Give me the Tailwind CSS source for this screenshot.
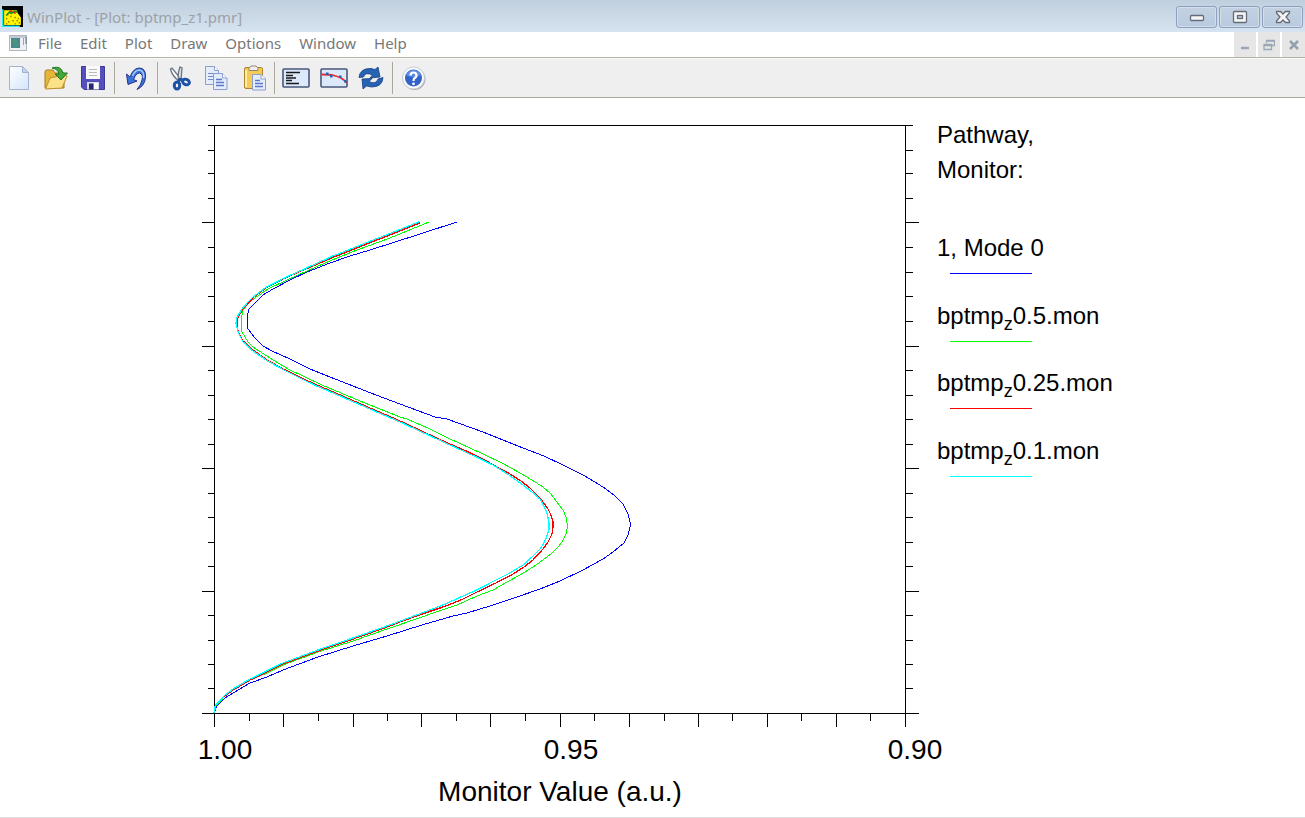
<!DOCTYPE html>
<html lang="en">
<head>
<meta charset="utf-8">
<title>WinPlot - [Plot: bptmp_z1.pmr]</title>
<script src="https://cdn.jsdelivr.net/npm/@tailwindcss/browser@4"></script>
</head>
<body class="flex min-h-screen flex-col bg-white font-['Noto_Sans',sans-serif]">

<header class="flex h-8 items-center bg-linear-to-b from-[#c0cfde] to-[#d6e3f0] pr-[2px] pl-[2px]">
  <svg class="size-[21px]" viewBox="0 0 20 20" aria-hidden="true">
    <rect width="20" height="20" fill="#000"/>
    <path d="M0 3h1.500v15.500H17V20H0z" fill="#30e8f0"/>
    <path d="M2 4h12l1 3 3 4v7H2z" fill="#fff500"/>
    <path d="M4 9l3-3 2 1 3-2 3 1" stroke="#089020" stroke-width="1.500" fill="none"/>
    <path d="M7 5h3M11 6l2 1M5 8h1" stroke="#e02010" stroke-width="1.500"/>
    <path d="M4 12h1M8 10h1M12 11h1M15 12h1M6 15h1M10 14h1M14 14h1M4 17h1M12 17h1M16 16h1" stroke="#7a5a00" stroke-width="1.300"/>
  </svg>
  <h1 class="ml-[4px] flex-1 pt-0.5 text-[15px] leading-5 text-[#9da2a7]">WinPlot - [Plot: bptmp_z1.pmr]</h1>
  <div class="flex gap-[2px] pt-px">
    <button aria-label="Minimize" class="flex h-[22px] w-[41px] items-center justify-center rounded-[3px] border border-[#8ea0bd] bg-linear-to-b from-[#c3d1e1] to-[#b9cbe0] shadow-[inset_0_0_0_1px_#d3deea]">
      <svg class="h-3.5 w-4" viewBox="0 0 16 14"><rect x="1.500" y="5.500" width="13" height="5" rx="1" fill="#f5f5f5" stroke="#666b78" stroke-width="1.300"/></svg>
    </button>
    <button aria-label="Maximize" class="flex h-[22px] w-[41px] items-center justify-center rounded-[3px] border border-[#8ea0bd] bg-linear-to-b from-[#c3d1e1] to-[#b9cbe0] shadow-[inset_0_0_0_1px_#d3deea]">
      <svg class="h-3.5 w-4" viewBox="0 0 16 14"><rect x="1.500" y="1.500" width="13" height="11" rx="1" fill="#f5f5f5" stroke="#666b78" stroke-width="1.300"/><rect x="5.500" y="5.500" width="5" height="3" fill="#b7c8dc" stroke="#666b78" stroke-width="1.300"/></svg>
    </button>
    <button aria-label="Close" class="flex h-[22px] w-[41px] items-center justify-center rounded-[3px] border border-[#8ea0bd] bg-linear-to-b from-[#c3d1e1] to-[#b9cbe0] shadow-[inset_0_0_0_1px_#d3deea]">
      <svg class="h-3.5 w-4" viewBox="0 0 16 14"><path d="M1.500 1.500h4L8 4l2.500-2.500h4v1.500L11 7l3.500 4v1.500h-4L8 10l-2.500 2.500h-4V11L5 7 1.500 3z" fill="#f5f5f5" stroke="#666b78" stroke-width="1.300"/></svg>
    </button>
  </div>
</header>

<div class="flex h-[25px] items-stretch bg-white">
  <svg class="mt-[3px] ml-[9px] h-4 w-[18px]" viewBox="0 0 18 16" aria-hidden="true">
    <rect x=".5" y=".5" width="17" height="15" fill="#eef0f3" stroke="#aeb5bf"/>
    <path d="M1 1h16v2H1z" fill="#c3cad3"/>
    <rect x="2" y="3" width="9" height="10" fill="#4b829a"/><path d="M3 4h5l2 8H4z" fill="#45947b"/>
    <path d="M14.500 3v7" stroke="#9aa3b0"/><path d="M17 2v7" stroke="#55708a"/>
  </svg>
  <nav aria-label="Main" class="flex flex-1 items-center gap-[18px] pb-[3px] pl-[11px] text-[15px] leading-5 text-[#777]">
    <button>File</button><button>Edit</button><button>Plot</button><button>Draw</button><button>Options</button><button>Window</button><button>Help</button>
  </nav>
  <div class="flex gap-0.5">
    <button aria-label="Minimize plot" class="flex w-[22px] items-center justify-center bg-[#e6e6e6]"><svg class="size-3" viewBox="0 0 12 12"><path d="M2 9h8" stroke="#9ba7b5" stroke-width="2.500"/></svg></button>
    <button aria-label="Restore plot" class="flex w-[22px] items-center justify-center bg-[#e6e6e6]"><svg class="size-3" viewBox="0 0 12 12" fill="none" stroke="#9ba7b5"><path d="M3.500 4V1.500h8v5H9M3.500 2h8" stroke-width="1.300"/><path d="M1 5.500h7.500v5H1zM1 6.500h7.500" stroke-width="1.300"/></svg></button>
    <button aria-label="Close plot" class="flex w-[23px] items-center justify-center bg-[#e6e6e6]"><svg class="size-3" viewBox="0 0 12 12"><path d="M2 2l8 8M10 2l-8 8" stroke="#93a0b0" stroke-width="2.500"/></svg></button>
  </div>
</div>

<div role="toolbar" aria-label="Plot tools" class="flex h-[41px] items-center border-y border-t-[#b5b0a8] border-b-[#aaa69e] bg-[#efefef] pl-[6px] shadow-[inset_0_1px_0_#fbf9f5]">
  <button aria-label="New" class="mr-[11px]"><svg class="size-[26px]" viewBox="0 0 26 26"><defs><linearGradient id="pg" x2="1" y2="1"><stop stop-color="#fff"/><stop offset="1" stop-color="#d3e5fb"/></linearGradient></defs><path d="M3.500 1.500h13l6 6v17h-19z" fill="url(#pg)" stroke="#a3b4d3"/><path d="M16.500 1.500v6h6z" fill="#c0d5ee" stroke="#a3b4d3"/></svg></button>
  <button aria-label="Open" class="mr-[11px]"><svg class="size-[26px]" viewBox="0 0 26 26"><path d="M2 23V7q0-2 2-2h6l2 3h9v15z" fill="#e6b638" stroke="#a87c20"/><path d="M2.500 24L7 13l15-3 2 1-5 12z" fill="#fbe286" stroke="#c09028"/><path d="M9 3q9-3 11 5h4.500L18 15l-6-6h4q-1-5-7-6z" fill="#45a83a" stroke="#23772a"/></svg></button>
  <button aria-label="Save" class="mr-[8px]"><svg class="size-[26px]" viewBox="0 0 26 26"><path d="M1.500 1.500h23v23H4l-2.500-2.500z" fill="#5450bd" stroke="#3c3a93"/><path d="M6 1h14v13H6z" fill="#fafafa"/><path d="M9 4.500h8M9 7.500h8M9 10.500h8" stroke="#bbb"/><path d="M7 17h12v7.500H7z" fill="#d9dbea"/><path d="M9 18.500h4.500v6H9z" fill="#28276e"/><path d="M14 18h4v6h-4z" fill="#fff"/></svg></button>
  <span class="mr-[8px] h-8 border-l border-[#aaa79d]"></span>
  <button aria-label="Undo" class="mr-[8px]"><svg class="size-[26px]" viewBox="0 0 26 26"><path d="M3.500 9l1.500 10.500L14 16l-3.500-1.500q2.500-6.500 6-6.500 4 1 2.500 7-1 5-5 9.500 8-3.500 8.500-12.500Q23 3 16 3 10 3.500 7 12z" fill="#3974d8" stroke="#28318c"/><path d="M9.500 11q2.500-6 7-6 5 1 4 8" fill="none" stroke="#a2cafa" stroke-width="1.500"/></svg></button>
  <span class="mr-[9px] h-8 border-l border-[#aaa79d]"></span>
  <button aria-label="Cut" class="mr-[10px]"><svg class="size-[26px]" viewBox="0 0 26 26"><path d="M3.500 4l1.500-1 8 10-1 3q-7-5-8.500-12z" fill="#fff" stroke="#68737e" stroke-width="1.300"/><path d="M13 2l2 1-1 12-2 2q-2-7 1-15z" fill="#dce4eb" stroke="#68737e" stroke-width="1.300"/><ellipse cx="10" cy="20.500" rx="2.700" ry="3.500" fill="none" stroke="#1d51a8" stroke-width="3"/><ellipse cx="19" cy="17" rx="3.500" ry="2.700" fill="none" stroke="#1d51a8" stroke-width="3" transform="rotate(25 19 17)"/><path d="M11 17l2-3 3 1" fill="none" stroke="#1d51a8" stroke-width="2.500"/></svg></button>
  <button aria-label="Copy" class="mr-[12px]"><svg class="size-[26px]" viewBox="0 0 26 26" fill="#e4edfc" stroke="#8f9cd0"><path d="M2.500 1.500h9l4 4v14h-13z"/><path d="M11.500 1.500v4h4" fill="#fff"/><path d="M5 8.500h6M5 11.500h6M5 14.500h5" stroke="#7488ca"/><path d="M10.500 8.500h9l4.500 4.500v11.500H10.500z"/><path d="M19.500 8.500V13H24" fill="#fff"/><path d="M13 14.500h6M13 17.500h8M13 20.500h8" stroke="#5f79c9" stroke-width="1.500"/></svg></button>
  <button aria-label="Paste" class="mr-[7px]"><svg class="size-[26px]" viewBox="0 0 26 26"><rect x="3.500" y="2.500" width="18" height="21" rx="1.500" fill="#f4cc53" stroke="#ad822a"/><path d="M5 5v17" stroke="#fff0a8" stroke-width="2"/><path d="M8 5.500V3l2-2h5l2 2v2.500z" fill="#eee" stroke="#8f886e"/><path d="M11.500 9.500H20l4.500 4.500v11H11.500z" fill="#e4edfc" stroke="#8f9cd0"/><path d="M20 9.500V14h4.500" fill="#fff" stroke="#8f9cd0"/><path d="M14 15.500h5M14 18.500h8M14 21.500h8" stroke="#5f79c9" stroke-width="1.500"/></svg></button>
  <span class="mr-[7px] h-8 border-l border-[#aaa79d]"></span>
  <button aria-label="Text view" class="mr-[10px]"><svg class="h-5 w-7" viewBox="0 0 28 20"><rect x="1" y="1" width="26" height="18" rx="1" fill="#dce9fb" stroke="#49577c" stroke-width="1.600"/><path d="M4 4.500h14M4 7.500h7M4 10h10M4 12.500h6M4 15.500h13" stroke="#18191d" stroke-width="1.300"/></svg></button>
  <button aria-label="Plot view" class="mr-[9px]"><svg class="h-5 w-7" viewBox="0 0 28 20"><rect x="1" y="1" width="26" height="18" rx="1" fill="#dce9fb" stroke="#49577c" stroke-width="1.600"/><path d="M2 6.500q8 0 12 1t7 2.500 6 5" fill="none" stroke="#ee2532" stroke-width="1.800"/><path d="M6 4.500h2.500V7H6zM10 7h2.500v2.500H10zM19 7.500h2.500V10H19zM24 12h2.500v2.500H24z" fill="#1e66b8"/></svg></button>
  <button aria-label="Refresh" class="mr-[7px]"><svg class="h-[26px] w-7" viewBox="0 0 28 26" fill="#2563b5" stroke="#173e80" stroke-width=".8"><path d="M2 12.500Q3 3 14 3.500l4 1L21 2l2 10-10 1 2.500-3Q8 6.500 6.500 12z"/><path d="M26 12.500Q25.500 22 14.500 22l-5-1L6 24 5 14l10-.500-3 3q7 3.500 9-2.500z"/></svg></button>
  <span class="mr-[8px] h-8 border-l border-[#aaa79d]"></span>
  <button aria-label="Help"><svg class="size-[26px]" viewBox="0 0 26 26"><circle cx="13.500" cy="14" r="11" fill="#a9adb3"/><circle cx="12.500" cy="13" r="11" fill="#fafcff" stroke="#c5cbd6"/><circle cx="12.500" cy="13" r="8.500" fill="#3363c9"/><path d="M4.500 10a9 9 0 0 1 16 0q-8 4-16 0" fill="#608ce0"/><path d="M9.500 10.500Q9.500 7.500 12.500 7.500t3 3q0 1.500-1.500 2.300T12.500 16" fill="none" stroke="#fff" stroke-width="2.200"/><circle cx="12.500" cy="18.800" r="1.400" fill="#fff"/></svg></button>
</div>

<main class="flex flex-1 items-start border-b border-[#dedede] font-['Liberation_Sans',sans-serif] text-black">
  <svg class="min-w-0 flex-1 overflow-visible" viewBox="0 98 922 719" role="img" aria-label="Monitor value plot">
    <g fill="none" stroke="#000" shape-rendering="crispEdges" transform="translate(.5 .5)">
      <path d="M214 125H905V713H214z"/>
      <path d="M207 125h7M207 150h7M207 173h7M207 198h7M201 222h13M207 247h7M207 272h7M207 296h7M207 321h7M201 346h13M207 370h7M207 395h7M207 419h7M207 444h7M201 468h13M207 493h7M207 517h7M207 542h7M207 566h7M201 591h13M207 615h7M207 640h7M207 664h7M207 688h7M201 713h13"/>
      <path d="M905 125h7M905 150h7M905 173h7M905 198h7M905 222h13M905 247h7M905 272h7M905 296h7M905 321h7M905 346h13M905 370h7M905 395h7M905 419h7M905 444h7M905 468h13M905 493h7M905 517h7M905 542h7M905 566h7M905 591h13M905 615h7M905 640h7M905 664h7M905 688h7M905 713h13"/>
      <path d="M214 713v13M249 713v7M283 713v13M318 713v7M353 713v13M387 713v7M421 713v13M456 713v7M490 713v13M525 713v7M560 713v13M594 713v7M629 713v13M664 713v7M698 713v13M732 713v7M767 713v13M801 713v7M836 713v13M870 713v7M905 713v13"/>
    </g>
    <g fill="none" shape-rendering="crispEdges">
      <polyline stroke="#0000ff" points="214,713 217,706 225,698 233,693 250,683 267,677 283,670 318,657 353,646 387,636 422,625 453,616 467,613 490,606 517,597 540,589 560,581 583,570 603,559 613,552 624,543 628,535 630,527 630,522 628,514 623,504 614,495 603,487 585,476 563,465 544,456 523,448 483,432 447,419 435,417 400,404 376,395 353,386 330,377 310,369 290,359 272,351 263,346 255,338 248,329 247,323 247,317 249,309 256,302 263,295 273,289 290,280 307,272 330,263 350,256 370,250 395,242 420,234 457,222"/>
      <polyline stroke="#00ff00" points="214,713 216,706 225,696 233,690 250,680 267,673 283,665 318,652 353,641 387,629 422,617 433,613 457,605 477,596 493,590 507,582 520,575 533,567 543,560 552,553 558,547 562,542 566,534 567,529 567,523 566,517 563,510 557,502 551,494 543,487 532,480 520,473 502,463 483,454 450,439 430,429 407,419 400,417 360,401 322,385 305,377 288,369 270,358 253,347 248,342 245,337 242,332 241,327 241,320 243,310 247,305 252,300 268,289 287,280 307,271 332,260 357,250 390,238 429,222"/>
      <polyline stroke="#ff0000" stroke-width="1.300" points="214,713 215,706 225,696 233,690 250,680 283,664 318,651 353,639 387,627 400,622 422,614 443,607 461,600 477,592 496,583 513,574 524,567 533,560 543,549 548,542 552,534 553,527 553,522 551,515 548,509 543,502 537,495 530,488 521,481 510,474 497,467 483,459 464,450 443,441 400,421 340,395 310,382 283,369 267,360 253,350 243,341 238,331 237,323 238,317 243,309 254,297 266,288 283,279 301,271 334,257 420,223"/>
      <polyline stroke="#00ffff" stroke-width="1.300" points="214,713 215,706 225,695 233,689 250,679 283,663 318,650 353,638 387,626 422,613 443,605 463,596 477,590 490,583 508,574 523,565 532,557 540,549 544,543 547,536 549,529 549,523 547,513 544,506 540,499 532,492 523,485 509,475 493,465 472,455 450,445 400,422 340,396 310,383 282,369 266,360 253,351 243,342 238,332 236,323 237,317 242,309 247,303 253,297 265,288 282,279 300,271 333,256 419,222"/>
    </g>
    <g class="text-[28px]" text-anchor="middle">
      <text x="225" y="759">1.00</text><text x="571" y="759">0.95</text><text x="915" y="759">0.90</text>
      <text x="560" y="801">Monitor Value (a.u.)</text>
    </g>
  </svg>
  <section aria-label="Legend" class="w-[383px] pt-[19px] pl-[15px] text-[24px] leading-[35px]">
    <h2>Pathway,<br>Monitor:</h2>
    <ul class="mt-[43px] grid h-[270px] grid-rows-4">
      <li>1, Mode 0<span class="mt-[8px] ml-[13px] block h-px w-[82px] bg-[#0000ff]"></span></li>
      <li>bptmp<sub class="bottom-[-6px] text-[18px]">z</sub>0.5.mon<span class="mt-[8px] ml-[13px] block h-px w-[82px] bg-[#00ff00]"></span></li>
      <li>bptmp<sub class="bottom-[-6px] text-[18px]">z</sub>0.25.mon<span class="mt-[8px] ml-[13px] block h-px w-[82px] bg-[#ff0000]"></span></li>
      <li>bptmp<sub class="bottom-[-6px] text-[18px]">z</sub>0.1.mon<span class="mt-[8px] ml-[13px] block h-px w-[82px] bg-[#00ffff]"></span></li>
    </ul>
  </section>
</main>
</body>
</html>
